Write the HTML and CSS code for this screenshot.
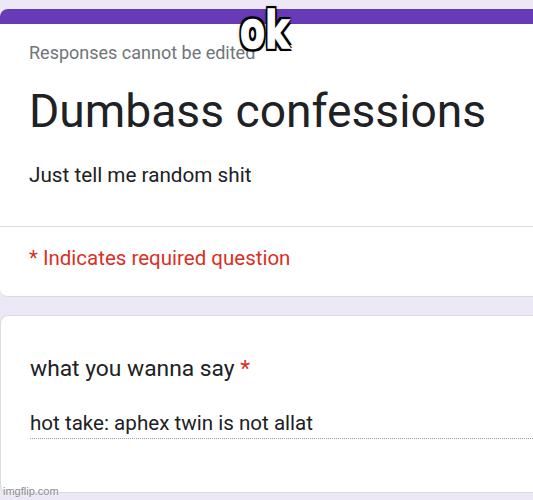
FILE: index.html
```html
<!DOCTYPE html>
<html lang="en">
<head>
  <meta charset="UTF-8">
  <title>Dumbass confessions</title>
  <link rel="stylesheet" href="styles.css">
</head>
<body>
  <div class="meme-text">ok</div>

  <div class="card header-card">
    <div class="card-top">
      <div class="note">Responses cannot be edited</div>
      <div class="title">Dumbass confessions</div>
      <div class="desc">Just tell me random shit</div>
    </div>
    <div class="required-note">* Indicates required question</div>
  </div>

  <div class="card question-card">
    <div class="question">what you wanna say <span class="star">*</span></div>
    <div class="answer">hot take: aphex twin is not allat</div>
  </div>

  <div class="watermark">imgflip.com</div>
</body>
</html>
```

FILE: styles.css
```css
body {
  margin: 0;
  padding: 9px 0 0 0;
  background-color: #ece8f6;
  font-family: Roboto, 'Liberation Sans', sans-serif;
  color: #202124;
  position: relative;
  height: 491px;
}
.card {
  background-color: #ffffff;
  border: 1px solid #dadce0;
  border-right: none;
  border-radius: 8px 0 0 8px;
  margin-left: 0;
}
.header-card {
  border-top: 15px solid #673ab7;
  border-left: none;
}
.card-top {
  padding: 19px 0 39px 29px;
  border-bottom: 1px solid #dadce0;
}
.note {
  font-size: 18px;
  line-height: 20px;
  color: #70757a;
}
.title {
  font-size: 46.2px;
  line-height: 56px;
  margin-top: 20px;
}
.desc {
  font-size: 20.7px;
  line-height: 24px;
  margin-top: 24px;
}
.required-note {
  padding: 19px 0 26px 29px;
  font-size: 20.5px;
  line-height: 24px;
  color: #d93025;
}
.question-card {
  margin-top: 18px;
  padding: 40px 0 53px 29px;
}
.question {
  font-size: 22.8px;
  line-height: 26px;
}
.star {
  color: #d93025;
}
.answer {
  margin-top: 29px;
  padding-bottom: 3px;
  font-size: 20.6px;
  line-height: 24px;
  border-bottom: 1px dotted #9aa0a6;
}
.meme-text {
  position: absolute;
  left: 240px;
  top: 0;
  font-family: Impact, 'DejaVu Sans', sans-serif;
  font-weight: bold;
  font-size: 52px;
  line-height: normal;
  color: #ffffff;
  -webkit-text-stroke: 1.5px #ffffff;
  transform: scaleX(0.7);
  transform-origin: left top;
  z-index: 5;
  text-shadow: 3px 3px 0 #000, -3px -3px 0 #000, 3px -3px 0 #000, -3px 3px 0 #000,
    0 3px 0 #000, 0 -3px 0 #000, 3px 0 0 #000, -3px 0 0 #000, 0 0 5px #000;
}
.watermark {
  position: absolute;
  left: 3px;
  top: 485px;
  font-family: 'Liberation Sans', sans-serif;
  font-size: 11px;
  color: #8a8a8a;
  text-shadow: 0 0 2px #ffffff;
}
```
